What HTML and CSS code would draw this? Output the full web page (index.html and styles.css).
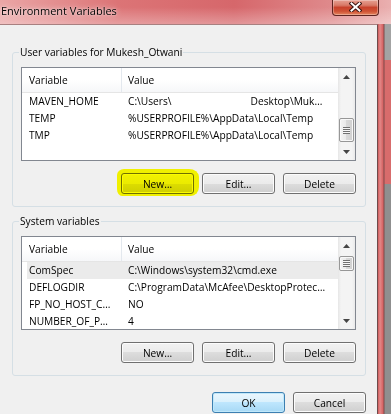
FILE: index.html
```html
<!DOCTYPE html>
<html lang="en">
<head>
  <meta charset="UTF-8">
  <title>Environment Variables</title>
  <meta name="viewport" content="width=device-width, initial-scale=1.0">
  <link rel="stylesheet" href="styles.css">
</head>
<body>
  <div class="window">
    <div class="titlebar">
      <span class="title">Environment Variables</span>
      <button class="close-btn" aria-label="Close">
        <svg width="13" height="10" viewBox="0 0 13 10">
          <path d="M2.5 1.5 L10.5 8.5 M10.5 1.5 L2.5 8.5" stroke="#3b1512" stroke-width="4" stroke-linecap="square" fill="none"/>
          <path d="M2.5 1.5 L10.5 8.5 M10.5 1.5 L2.5 8.5" stroke="#fff" stroke-width="2" stroke-linecap="square" fill="none"/>
        </svg>
      </button>
    </div>
    <div class="main">
      <div class="client">
        <fieldset class="group">
          <legend>User variables for Mukesh_Otwani</legend>
          <div class="list">
            <div class="list-view">
              <div class="list-head">
                <div class="col-name">Variable</div>
                <div class="col-value">Value</div>
              </div>
              <div class="row">
                <div class="col-name">MAVEN_HOME</div>
                <div class="col-value">C:\Users\<span class="blank"></span>Desktop\Muk…</div>
              </div>
              <div class="row">
                <div class="col-name">TEMP</div>
                <div class="col-value">%USERPROFILE%\AppData\Local\Temp</div>
              </div>
              <div class="row">
                <div class="col-name">TMP</div>
                <div class="col-value">%USERPROFILE%\AppData\Local\Temp</div>
              </div>
            </div>
            <div class="scrollbar scroll-end">
              <div class="arrow">
                <svg width="7" height="4" viewBox="0 0 7 4"><path d="M0 4 L3.5 0 L7 4Z" fill="#454545"/></svg>
              </div>
              <div class="track"><div class="thumb"><span class="grip"></span></div></div>
              <div class="arrow">
                <svg width="7" height="4" viewBox="0 0 7 4"><path d="M0 0 L3.5 4 L7 0Z" fill="#454545"/></svg>
              </div>
            </div>
          </div>
          <div class="actions">
            <button class="btn btn-marked">New…</button>
            <button class="btn">Edit…</button>
            <button class="btn">Delete</button>
          </div>
        </fieldset>

        <fieldset class="group group-system">
          <legend>System variables</legend>
          <div class="list">
            <div class="list-view">
              <div class="list-head">
                <div class="col-name">Variable</div>
                <div class="col-value">Value</div>
              </div>
              <div class="row selected">
                <div class="col-name">ComSpec</div>
                <div class="col-value">C:\Windows\system32\cmd.exe</div>
              </div>
              <div class="row">
                <div class="col-name">DEFLOGDIR</div>
                <div class="col-value">C:\ProgramData\McAfee\DesktopProtec…</div>
              </div>
              <div class="row">
                <div class="col-name">FP_NO_HOST_C…</div>
                <div class="col-value">NO</div>
              </div>
              <div class="row">
                <div class="col-name">NUMBER_OF_P…</div>
                <div class="col-value">4</div>
              </div>
            </div>
            <div class="scrollbar">
              <div class="arrow">
                <svg width="7" height="4" viewBox="0 0 7 4"><path d="M0 4 L3.5 0 L7 4Z" fill="#454545"/></svg>
              </div>
              <div class="track"><div class="thumb"><span class="grip"></span></div></div>
              <div class="arrow">
                <svg width="7" height="4" viewBox="0 0 7 4"><path d="M0 0 L3.5 4 L7 0Z" fill="#454545"/></svg>
              </div>
            </div>
          </div>
          <div class="actions">
            <button class="btn">New…</button>
            <button class="btn">Edit…</button>
            <button class="btn">Delete</button>
          </div>
        </fieldset>

        <div class="footer">
          <button class="btn btn-default">OK</button>
          <button class="btn">Cancel</button>
        </div>
      </div>
      <div class="edge"></div>
    </div>
  </div>
</body>
</html>
```

FILE: styles.css
```css
* {
  box-sizing: border-box;
}
html, body {
  margin: 0;
  padding: 0;
}
body {
  width: 391px;
  height: 414px;
  overflow: hidden;
  font-family: "Open Sans", "Noto Sans", sans-serif;
  font-size: 10.2px;
  color: #000;
}
.window {
  display: flex;
  flex-direction: column;
  height: 414px;
  background:
    linear-gradient(to bottom, rgba(255,255,255,0) 30%, rgba(255,255,255,.3) 100%) top / 100% 24px no-repeat,
    linear-gradient(to right, #eaa6a6 0%, #dc7476 30%, #d6676b 60%, #df8a8c 85%, #eab0b0 100%);
}
.titlebar {
  display: flex;
  justify-content: space-between;
  align-items: flex-start;
  height: 24px;
  padding-left: 1px;
}
.title {
  padding-top: 4px;
  font-size: 11px;
  line-height: 14px;
  text-shadow: 0 0 6px rgba(255,255,255,.9), 0 0 2px rgba(255,255,255,.7);
}
.close-btn {
  display: flex;
  justify-content: center;
  align-items: flex-start;
  width: 47px;
  height: 16px;
  margin-right: 12px;
  padding: 2px 0 0;
  border: 1px solid #5e2420;
  border-top: none;
  border-radius: 0 0 4px 4px;
  background: linear-gradient(#e6a092 0%, #d87a68 35%, #c8422c 50%, #cf5234 75%, #e48660 100%);
  box-shadow: inset 0 0 0 1px rgba(255,255,255,.3);
}
.main {
  flex: 1;
  display: flex;
  min-height: 0;
}
.client {
  width: 378px;
  padding: 20px 11px 0 12px;
  background: #f0f0f0;
  border-top: 1px solid #a88080;
  border-right: 1px solid #6e4a4a;
}
.edge {
  flex: 1;
  background:
    linear-gradient(to right, #cf5b5b 0, #e28989 2px, #d66262 5px, #7d4a4a 6px, rgba(0,0,0,0) 7px),
    linear-gradient(#a3a3a3 0 36px, #d86c6c 36px 160px, #8f8f8f 160px);
}

/* group boxes */
.group {
  min-width: 0;
  margin: 0;
  padding: 8px 9px 12px 8px;
  border: 1px solid #d5dfe5;
  border-radius: 3px;
}
.group legend {
  margin-left: -2px;
  padding: 0 1px;
  line-height: 14px;
}
.group-system {
  margin-top: 7px;
}

/* list views */
.list {
  display: flex;
  height: 94px;
  border: 1px solid #828790;
  background: #fff;
}
.list-view {
  flex: 1;
  min-width: 0;
  overflow: hidden;
}
.list-head {
  display: flex;
  height: 25px;
  line-height: 24px;
  border-bottom: 1px solid #e5e5e5;
  background: linear-gradient(#fff 0%, #fff 50%, #f6f7f9 100%);
}
.list-head .col-name {
  width: 100px;
  padding-left: 7px;
  border-right: 1px solid #e3e8ee;
}
.list-head .col-value {
  padding-left: 6px;
}
.row {
  display: flex;
  height: 17px;
  margin-left: 5px;
  line-height: 17px;
  white-space: nowrap;
}
.row .col-name {
  width: 95px;
  padding-left: 2px;
  overflow: hidden;
}
.row .col-value {
  padding-left: 6px;
  overflow: hidden;
}
.row.selected {
  background: #ebebeb;
}
.blank {
  display: inline-block;
  width: 79px;
}

/* scrollbars */
.scrollbar {
  display: flex;
  flex-direction: column;
  width: 17px;
  background: linear-gradient(to right, #e6e6e6 0, #f4f4f4 3px, #f4f4f4 14px, #eaeaea 100%);
}
.arrow {
  display: flex;
  align-items: center;
  justify-content: center;
  height: 17px;
}
.track {
  flex: 1;
  display: flex;
  flex-direction: column;
  padding: 2px 1px;
}
.scroll-end .track {
  justify-content: flex-end;
  padding-bottom: 1px;
}
.thumb {
  display: flex;
  align-items: center;
  justify-content: center;
  height: 15px;
  border: 1px solid #979797;
  border-radius: 2px;
  background: linear-gradient(to right, #f3f3f3 0%, #e8e8e8 50%, #d8d8d8 50%, #d0d0d0 100%);
  box-shadow: inset 0 0 0 1px #f8f8f8;
}
.scroll-end .thumb {
  height: 24px;
}
.grip {
  width: 7px;
  height: 7px;
  background: repeating-linear-gradient(to bottom, #707070 0 1px, #f6f6f6 1px 2px);
}

/* buttons */
.actions {
  display: flex;
  justify-content: flex-end;
  gap: 8px;
  margin-top: 12px;
}
.footer {
  display: flex;
  justify-content: flex-end;
  gap: 8px;
  margin-top: 16px;
}
.btn {
  width: 73px;
  height: 21px;
  padding: 0;
  font: inherit;
  color: #000;
  border: 1px solid #707070;
  border-radius: 3px;
  background: linear-gradient(#f2f2f2 0%, #ebebeb 50%, #dddddd 50%, #cfcfcf 100%);
  box-shadow: inset 0 0 0 1px #fcfcfc;
}
.btn-default {
  border-color: #3c7fb1;
  background: linear-gradient(#eaf6fd 0%, #d9f0fc 50%, #bee6fd 50%, #a7d9f5 100%);
  box-shadow: inset 0 0 0 1px #c0e8fa;
}
.btn-marked {
  position: relative;
}
.btn-marked::after {
  content: "";
  position: absolute;
  inset: -5px -6px -3px -5px;
  border-radius: 7px 10px 8px 5px / 6px 8px 9px 7px;
  background: #ffff00;
  mix-blend-mode: multiply;
}
```
